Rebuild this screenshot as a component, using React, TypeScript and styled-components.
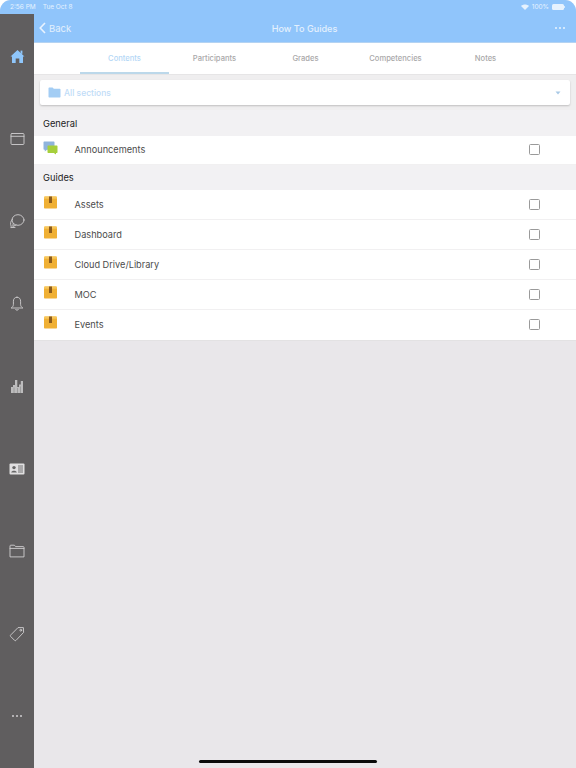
import React from "react";
import styled, { createGlobalStyle } from "styled-components";

const Global = createGlobalStyle`
  html, body { margin: 0; padding: 0; background: #fff; }
  body { font-family: Inter, "Liberation Sans", sans-serif; }
`;

const Screen = styled.div`
  position: relative;
  width: 576px;
  height: 768px;
  overflow: hidden;
  display: flex;
  flex-direction: column;
  background: #e9e7ea;
  border-radius: 11px 11px 0 0;
`;
const StatusBar = styled.div`
  height: 14px;
  flex: none;
  background: #90c5fb;
  color: #e6f2fe;
  font-size: 6.5px;
  display: flex;
  align-items: center;
  justify-content: space-between;
  padding: 0 11px 0 10px;
`;
const StatusGroup = styled.div`
  display: flex;
  align-items: center;
  gap: 7px;
`;
const StatusRight = styled(StatusGroup)`
  gap: 3px;
`;
const Body = styled.div`
  flex: 1;
  display: flex;
  min-height: 0;
`;
const Sidebar = styled.nav`
  width: 34px;
  flex: none;
  background: #605e5f;
  display: flex;
  flex-direction: column;
  align-items: center;
  padding-top: 32px;
  gap: 62.5px;
`;
const NavIcon = styled.div`
  width: 17px;
  height: 20px;
  display: flex;
  align-items: center;
  justify-content: center;
  color: #d0cfd0;
`;
const Main = styled.main`
  flex: 1;
  display: flex;
  flex-direction: column;
  min-width: 0;
`;
const NavBar = styled.header`
  height: 28px;
  flex: none;
  box-sizing: content-box;
  background: #90c5fb;
  border-bottom: 1px solid #b4d3f2;
  display: grid;
  grid-template-columns: 1fr auto 1fr;
  align-items: center;
  padding: 0 11px 0 5px;
  color: #e3f0fd;
`;
const Back = styled.div`
  display: flex;
  align-items: center;
  gap: 3px;
  font-size: 9.5px;
`;
const Title = styled.div`
  font-size: 9.1px;
  font-weight: 500;
  padding-left: 5px;
`;
const More = styled.div`
  justify-self: end;
  display: flex;
  gap: 2px;
`;
const Dot = styled.span<{ $c?: string }>`
  width: 2px;
  height: 2px;
  border-radius: 50%;
  background: ${(p) => p.$c || "#e9f3fe"};
`;
const Tabs = styled.div`
  height: 31px;
  flex: none;
  background: #fff;
  display: flex;
  padding-left: 46px;
`;
const Tab = styled.div<{ $active?: boolean; $w: number }>`
  width: ${(p) => p.$w}px;
  display: flex;
  align-items: center;
  justify-content: center;
  padding-top: 2px;
  font-size: 7.6px;
  font-weight: 500;
  color: ${(p) => (p.$active ? "#b4d7f6" : "#a9a8a9")};
  border-bottom: 2px solid ${(p) => (p.$active ? "#bcd8ea" : "transparent")};
  box-sizing: border-box;
`;
const Content = styled.div`
  flex: 1;
  display: flex;
  flex-direction: column;
  border-top: 1px solid #e6e5e6;
  background: #e9e7ea;
`;
const SelectWrap = styled.div`
  padding: 5px 6px 5px 6px;
  background: #efeeef;
`;
const Select = styled.div`
  height: 25px;
  background: #fff;
  border-radius: 2px;
  box-shadow: 0 1px 2px rgba(0, 0, 0, 0.2);
  display: flex;
  align-items: center;
  padding: 0 9px 0 8px;
  color: #c0dcf7;
  font-size: 8.5px;
  gap: 3px;
`;
const SelectText = styled.span`
  flex: 1;
  font-weight: 500;
`;
const SectionHead = styled.div<{ $h: number }>`
  height: ${(p) => p.$h}px;
  background: #f2f1f3;
  display: flex;
  align-items: center;
  padding-left: 9px;
  font-size: 9.3px;
  color: #222;
`;
const Row = styled.div<{ $h?: number; $last?: boolean; $pad?: number }>`
  height: ${(p) => p.$h || 30}px;
  background: #fff;
  display: flex;
  align-items: center;
  padding: 0 0 ${(p) => p.$pad || 0}px 9px;
  box-sizing: border-box;
  border-bottom: 1px solid ${(p) => (p.$last ? "#e3e2e3" : "#f1f0f1")};
`;
const RowIcon = styled.div`
  width: 15px;
  height: 15px;
  flex: none;
  margin-top: -3px;
  display: flex;
`;
const RowLabel = styled.div`
  margin-left: 16.5px;
  flex: 1;
  font-size: 9.2px;
  color: #4c4c4c;
`;
const Check = styled.div`
  width: 9px;
  height: 9px;
  border: 1.2px solid #9a9a9a;
  border-radius: 1.5px;
  margin-right: 36px;
`;
const HomeBar = styled.div`
  position: absolute;
  left: 199px;
  bottom: 5px;
  width: 178px;
  height: 3px;
  border-radius: 2px;
  background: #0a0a0a;
`;

const stroke = { fill: "none", stroke: "currentColor", strokeWidth: 0.9, strokeLinejoin: "round" as const, strokeLinecap: "round" as const };

const HomeIcon = () => (
  <svg width="15" height="15" viewBox="0 0 15 15">
    <path d="M7.5 1 L14.5 7.6 L13 7.6 L13 14 L9.3 14 L9.3 9.6 L5.7 9.6 L5.7 14 L2 14 L2 7.6 L.5 7.6 Z" fill="#8fc6fb" />
    <rect x="10.6" y="1.6" width="1.8" height="3.2" fill="#8fc6fb" />
  </svg>
);
const CalendarIcon = () => (
  <svg width="15" height="14" viewBox="0 0 15 14" {...stroke}>
    <rect x="1" y="1.5" width="13" height="11" rx="1" />
    <path d="M1 4.3H14" />
  </svg>
);
const ChatIcon = () => (
  <svg width="16" height="16" viewBox="0 0 16 16" {...stroke}>
    <ellipse cx="9" cy="7" rx="6" ry="5.3" />
    <path d="M4.2 10.5 L3.8 13.5 L7 12" />
    <path d="M3.4 6.2C1.6 8 1 11 2.2 13.2 L1.8 14.6 L6 14.4" />
  </svg>
);
const BellIcon = () => (
  <svg width="14" height="16" viewBox="0 0 14 16" {...stroke}>
    <path d="M7 1.2C4.6 1.2 3.4 3 3.4 5.2V8.4C3.4 10 2.6 11 1.2 12H12.8C11.4 11 10.6 10 10.6 8.4V5.2C10.6 3 9.4 1.2 7 1.2Z" />
    <path d="M5.6 13.4C6 14.6 8 14.6 8.4 13.4" />
  </svg>
);
const ChartIcon = () => (
  <svg width="15" height="16" viewBox="0 0 15 15">
    <path d="M1 14.5V8.5H3V6.5H5V1.5H7.3V8.5H9V6H10.8V2.5H13V14.5Z" fill="#bdbcbd" />
    <path d="M4 14.5V9M7.5 14.5V9.5M10.5 14.5V8" stroke="#888" strokeWidth="0.6" />
  </svg>
);
const CardIcon = () => (
  <svg width="16" height="12" viewBox="0 0 16 12">
    <rect x="0.5" y="0.5" width="15" height="11" rx="1" fill="#e0dfe0" />
    <circle cx="5" cy="4.6" r="1.7" fill="#666" />
    <path d="M2.2 9.6C2.4 7.2 7.6 7.2 7.8 9.6Z" fill="#666" />
    <path d="M9 3H14M9 5H14M9 7H14M9 9H14" stroke="#666" strokeWidth="0.9" />
  </svg>
);
const FolderOutline = () => (
  <svg width="16" height="14" viewBox="0 0 16 14" {...stroke}>
    <path d="M1 12.5V2C1 1.5 1.3 1.2 1.8 1.2H5.4L6.6 2.6H14.2C14.7 2.6 15 2.9 15 3.4V12.5Z" />
    <path d="M1 4.4H15" />
  </svg>
);
const TagIcon = () => (
  <svg width="16" height="16" viewBox="0 0 16 16" {...stroke}>
    <path d="M9.4 1.6L14.4 1.6L14.6 6.4L7 14.4C6.6 14.8 6 14.8 5.6 14.4L1.6 10.4C1.2 10 1.2 9.5 1.6 9.1Z" />
    <circle cx="11.8" cy="4.2" r="0.9" />
  </svg>
);
const FolderFilled = () => (
  <svg width="13" height="11" viewBox="0 0 13 11">
    <path d="M0.5 1.2C0.5 .8 .8 .5 1.2 .5H4.6L5.8 1.8H11.8C12.2 1.8 12.5 2.1 12.5 2.5V9.8C12.5 10.2 12.2 10.5 11.8 10.5H1.2C.8 10.5 .5 10.2 .5 9.8Z" fill="#a3cdf4" />
  </svg>
);
const Forum = () => (
  <svg width="15" height="15" viewBox="0 0 15 15">
    <path d="M0.5 1.2C.5 .8.8.5 1.2.5H10.8C11.2.5 11.5.8 11.5 1.2V8C11.5 8.4 11.2 8.7 10.8 8.7H4L1.8 10.6V8.7H1.2C.8 8.7.5 8.4.5 8Z" fill="#8fb4dc" />
    <path d="M4.5 5.2C4.5 4.8 4.8 4.5 5.2 4.5H13.8C14.2 4.5 14.5 4.8 14.5 5.2V11.3C14.5 11.7 14.2 12 13.8 12H13V13.6L10.8 12H5.2C4.8 12 4.5 11.7 4.5 11.3Z" fill="#a6cf3c" />
  </svg>
);
const BoxIcon = () => (
  <svg width="15" height="13" viewBox="0 0 15 13">
    <path d="M1 1.5L2.2.5H12.8L14 1.5V11.8C14 12.2 13.7 12.5 13.3 12.5H1.7C1.3 12.5 1 12.2 1 11.8Z" fill="#f0b034" />
    <rect x="1" y="0.5" width="13" height="2.2" fill="#f7c75c" />
    <rect x="6" y="0.5" width="3" height="6.5" fill="#8a5a1c" />
  </svg>
);

const items = [CalendarIcon, ChatIcon, BellIcon, ChartIcon, CardIcon, FolderOutline, TagIcon];
const guides = ["Assets", "Dashboard", "Cloud Drive/Library", "MOC", "Events"];
const tabs: [string, number, boolean?][] = [
  ["Contents", 89, true],
  ["Participants", 91],
  ["Grades", 91],
  ["Competencies", 89],
  ["Notes", 91],
];

export default function App() {
  return (
    <Screen>
      <Global />
      <StatusBar>
        <StatusGroup>
          <span>2:56 PM</span>
          <span>Tue Oct 8</span>
        </StatusGroup>
        <StatusRight>
          <svg width="8" height="6" viewBox="0 0 8 6"><path d="M0 2C2.2 0 5.8 0 8 2L4 6Z" fill="#e6f2fe" /></svg>
          <span>100%</span>
          <svg width="13" height="6" viewBox="0 0 13 6"><rect width="12" height="6" rx="1.5" fill="#e6f2fe" /><rect x="12.2" y="2" width="0.8" height="2" fill="#e6f2fe" /></svg>
        </StatusRight>
      </StatusBar>
      <Body>
        <Sidebar>
          <NavIcon><HomeIcon /></NavIcon>
          {items.map((I, i) => (
            <NavIcon key={i}><I /></NavIcon>
          ))}
          <NavIcon>
            <More>
              <Dot $c="#cfcecf" /><Dot $c="#cfcecf" /><Dot $c="#cfcecf" />
            </More>
          </NavIcon>
        </Sidebar>
        <Main>
          <NavBar>
            <Back>
              <svg width="7" height="12" viewBox="0 0 7 12" fill="none" stroke="#e9f3fe" strokeWidth="1.6"><path d="M6 1L1.2 6L6 11" /></svg>
              <span>Back</span>
            </Back>
            <Title>How To Guides</Title>
            <More><Dot /><Dot /><Dot /></More>
          </NavBar>
          <Tabs>
            {tabs.map(([t, w, a]) => (
              <Tab key={t} $w={w} $active={a}>{t}</Tab>
            ))}
          </Tabs>
          <Content>
            <SelectWrap>
              <Select>
                <FolderFilled />
                <SelectText>All sections</SelectText>
                <svg width="6" height="4" viewBox="0 0 6 4"><path d="M0.5 0.5H5.5L3 3.5Z" fill="#a9c9e6" /></svg>
              </Select>
            </SelectWrap>
            <SectionHead $h={26}>General</SectionHead>
            <Row $h={29} $pad={1}>
              <RowIcon><Forum /></RowIcon>
              <RowLabel>Announcements</RowLabel>
              <Check />
            </Row>
            <SectionHead $h={25}>Guides</SectionHead>
            {guides.map((g, i) => {
              const last = i === guides.length - 1;
              return (
                <Row key={g} $last={last} $h={last ? 31 : 30} $pad={last ? 1 : 0}>
                  <RowIcon><BoxIcon /></RowIcon>
                  <RowLabel>{g}</RowLabel>
                  <Check />
                </Row>
              );
            })}
          </Content>
        </Main>
      </Body>
      <HomeBar />
    </Screen>
  );
}
